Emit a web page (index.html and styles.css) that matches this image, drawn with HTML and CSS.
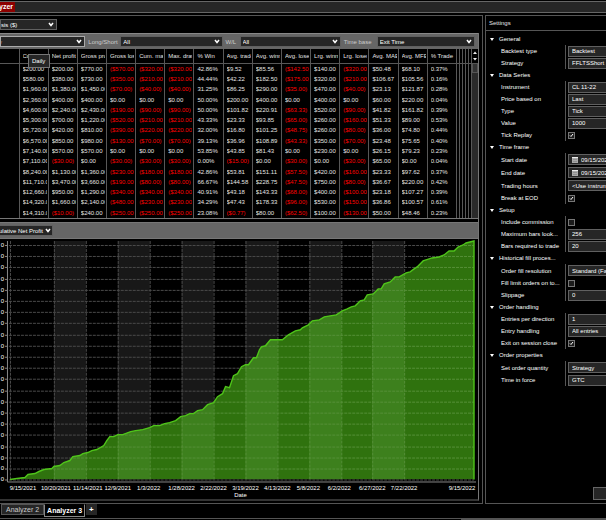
FILE: index.html
```html
<!DOCTYPE html>
<html lang="en">
<head>
  <meta charset="UTF-8" />
  <meta name="viewport" content="width=device-width, initial-scale=1.0"/>
  <title>Strategy Analyzer</title>
  <link rel="stylesheet" href="styles.css">
</head>
<body>
  <header class="titlebar"><h1>yzer</h1></header>

  <main class="workspace">
    <section class="results">
      <div class="display-bar">
        <select class="display-select" aria-label="Display"><option>sis ($)</option></select>
      </div>

      <div class="content">
        <div class="filters">
          <select class="period" aria-label="Period"><option>y</option></select>
          <label for="side">Long/Short</label>
          <select id="side"><option>All</option></select>
          <label for="wl">W/L</label>
          <select id="wl"><option>All</option></select>
          <label for="timeBase">Time base</label>
          <select id="timeBase"><option>Exit Time</option></select>
          <div class="tooltip">Daily</div>
        </div>

        <div class="grid">
          <table>
            <colgroup id="cols"></colgroup>
            <thead><tr id="headRow"></tr></thead>
            <tbody id="resultTable"></tbody>
          </table>
          <div class="scrollbar">
            <div class="arrows">
              <svg viewBox="0 0 6 14"><path d="M1 5l2-2.500 2 2.500zM1 9l2 2.500 2-2.500z" fill="#eee"/></svg>
            </div>
            <div class="thumb"></div>
          </div>
        </div>

        <div class="graph-bar">
          <select class="graph-select" aria-label="Graph"><option>ulative Net Profit</option></select>
        </div>

        <svg class="chart" id="chart" viewBox="0 0 479 261" preserveAspectRatio="xMinYMin meet"></svg>
      </div>
    </section>

    <aside class="settings">
      <h2>Settings</h2>
      <form>
        <h3>General</h3>
        <div class="prop"><label for="backtest">Backtest type</label><div class="field"><select id="backtest"><option>Backtest</option></select></div></div>
        <div class="prop"><label for="strategy">Strategy</label><div class="field"><select id="strategy"><option>FFLTSShort</option></select></div></div>

        <h3>Data Series</h3>
        <div class="prop"><label for="instrument">Instrument</label><div class="field"><input type="text" id="instrument" value="CL 11-22"></div></div>
        <div class="prop"><label for="price">Price based on</label><div class="field"><select id="price"><option>Last</option></select></div></div>
        <div class="prop"><label for="type">Type</label><div class="field"><select id="type"><option>Tick</option></select></div></div>
        <div class="prop"><label for="value">Value</label><div class="field"><input type="text" id="value" value="1000"></div></div>
        <div class="prop"><label for="replay">Tick Replay</label><div class="field"><input type="checkbox" id="replay" checked></div></div>

        <h3>Time frame</h3>
        <div class="prop tall"><label for="start">Start date</label><div class="field"><input type="text" class="date" id="start" value="09/15/2021"></div></div>
        <div class="prop tall"><label for="end">End date</label><div class="field"><input type="text" class="date" id="end" value="09/15/2022"></div></div>
        <div class="prop tall"><label for="hours">Trading hours</label><div class="field"><select id="hours"><option>&lt;Use instrument settings&gt;</option></select></div></div>
        <div class="prop"><label for="eod">Break at EOD</label><div class="field"><input type="checkbox" id="eod" checked></div></div>

        <h3>Setup</h3>
        <div class="prop"><label for="commission">Include commission</label><div class="field"><input type="checkbox" id="commission"></div></div>
        <div class="prop"><label for="maxBars">Maximum bars look...</label><div class="field"><select id="maxBars"><option>256</option></select></div></div>
        <div class="prop"><label for="barsReq">Bars required to trade</label><div class="field"><input type="text" id="barsReq" value="20"></div></div>

        <h3>Historical fill proces...</h3>
        <div class="prop tall"><label for="fill">Order fill resolution</label><div class="field"><select id="fill"><option>Standard (Fastest)</option></select></div></div>
        <div class="prop"><label for="limit">Fill limit orders on to...</label><div class="field"><input type="checkbox" id="limit"></div></div>
        <div class="prop"><label for="slippage">Slippage</label><div class="field"><input type="text" id="slippage" value="0"></div></div>

        <h3>Order handling</h3>
        <div class="prop"><label for="entries">Entries per direction</label><div class="field"><input type="text" id="entries" value="1"></div></div>
        <div class="prop"><label for="entry">Entry handling</label><div class="field"><select id="entry"><option>All entries</option></select></div></div>
        <div class="prop"><label for="exitClose">Exit on session close</label><div class="field"><input type="checkbox" id="exitClose" checked></div></div>

        <h3>Order properties</h3>
        <div class="prop tall"><label for="quantity">Set order quantity</label><div class="field"><select id="quantity"><option>Strategy</option></select></div></div>
        <div class="prop"><label for="tif">Time in force</label><div class="field"><select id="tif"><option>GTC</option></select></div></div>
      </form>
      <button type="button" class="run" aria-label="Run"></button>
    </aside>
  </main>

  <nav class="tabs">
    <button type="button">Analyzer 2</button>
    <button type="button" class="active">Analyzer 3</button>
    <button type="button" class="add">+</button>
  </nav>
  <footer class="statusline"><div></div></footer>

  <script>
    const heads = ["Cum. net", "Net profit", "Gross profit", "Gross loss", "Cum. max.", "Max. drawdown", "% Win",
      "Avg. trade", "Avg. winner", "Avg. loser", "Lrg. winner", "Lrg. loser", "Avg. MAE", "Avg. MFE", "% Trade"];

    // negative amounts are shown in brackets
    const rows = [
      "$200.00|$200.00|$770.00|($570.00)|($320.00)|($320.00)|42.86%|$9.52|$85.56|($142.50)|$140.00|($320.00)|$50.48|$68.10|0.37%",
      "$580.00|$380.00|$730.00|($350.00)|($210.00)|($210.00)|44.44%|$42.22|$182.50|($175.00)|$320.00|($210.00)|$106.67|$105.56|0.16%",
      "$1,960.00|$1,380.00|$1,450.00|($70.00)|($40.00)|($40.00)|31.25%|$86.25|$290.00|($35.00)|$470.00|($40.00)|$23.13|$121.87|0.28%",
      "$2,360.00|$400.00|$400.00|$0.00|$0.00|$0.00|50.00%|$200.00|$400.00|$0.00|$400.00|$0.00|$60.00|$220.00|0.04%",
      "$4,600.00|$2,240.00|$2,430.00|($190.00)|($90.00)|($90.00)|50.00%|$101.82|$220.91|($63.33)|$520.00|($90.00)|$41.82|$161.82|0.39%",
      "$5,300.00|$700.00|$1,220.00|($520.00)|($210.00)|($210.00)|43.33%|$23.33|$93.85|($65.00)|$260.00|($160.00)|$51.33|$89.00|0.53%",
      "$5,720.00|$420.00|$810.00|($390.00)|($220.00)|($220.00)|32.00%|$16.80|$101.25|($48.75)|$260.00|($80.00)|$36.00|$74.80|0.44%",
      "$6,570.00|$850.00|$980.00|($130.00)|($70.00)|($70.00)|39.13%|$36.96|$108.89|($43.33)|$350.00|($70.00)|$23.48|$75.65|0.40%",
      "$7,140.00|$570.00|$570.00|$0.00|$0.00|$0.00|53.85%|$43.85|$81.43|$0.00|$230.00|$0.00|$26.15|$79.23|0.23%",
      "$7,110.00|($30.00)|$0.00|($30.00)|($30.00)|($30.00)|0.00%|($15.00)|$0.00|($30.00)|$0.00|($30.00)|$65.00|$0.00|0.04%",
      "$8,240.00|$1,130.00|$1,360.00|($230.00)|($180.00)|($180.00)|42.86%|$53.81|$151.11|($57.50)|$420.00|($160.00)|$23.33|$97.62|0.37%",
      "$11,710.00|$3,470.00|$3,660.00|($190.00)|($80.00)|($80.00)|66.67%|$144.58|$228.75|($47.50)|$750.00|($80.00)|$36.67|$220.00|0.42%",
      "$12,660.00|$950.00|$1,290.00|($340.00)|($340.00)|($340.00)|40.91%|$43.18|$143.33|($68.00)|$400.00|($100.00)|$23.18|$107.27|0.39%",
      "$14,320.00|$1,660.00|$2,140.00|($480.00)|($230.00)|($230.00)|34.29%|$47.43|$178.33|($96.00)|$530.00|($150.00)|$36.86|$100.57|0.61%",
      "$14,310.00|($10.00)|$240.00|($250.00)|($250.00)|($250.00)|23.08%|($0.77)|$80.00|($62.50)|$100.00|($130.00)|$50.00|$48.46|0.23%"
    ];

    function renderTable() {
      // narrow collapsed columns on the right
      const thin = n => `<${n}></${n}>`.repeat(5);
      document.getElementById("cols").innerHTML =
        `<col class="first">` + "<col>".repeat(heads.length) + `<col class="thin">`.repeat(5);
      document.getElementById("headRow").innerHTML =
        "<th></th>" + heads.map(h => `<th><span>${h}</span></th>`).join("") + thin("th");
      document.getElementById("resultTable").innerHTML = rows.map(row => {
        const cells = row.split("|").map(v =>
          `<td${v[0] === "(" ? ' class="loss"' : ""}><span>${v}</span></td>`).join("");
        return `<tr><td></td>${cells}${thin("td")}</tr>`;
      }).join("");
    }

    const ticks = [[10, "9/15/2021", 23], [54, "10/20/2021", 56], [86, "11/14/2021", 88], [118, "12/9/2021", 118],
      [150, "1/3/2022", 149], [182, "1/28/2022", 182], [214, "2/22/2022", 214], [246, "3/19/2022", 246],
      [278, "4/13/2022", 278], [310, "5/8/2022", 309], [342, "6/2/2022", 340], [373, "6/27/2022", 373],
      [405, "7/22/2022", 405], [475, "9/15/2022", 463]];

    const curve = "10,241 17,240 25,239 28,236 35,235 39,233 44,231 52,230 54,228 60,227 64,224 70,222 73,218 80,217 " +
      "83,215 88,214 92,212 97,211 104,207 107,202 110,198 114,198 118,196 123,196 131,193 136,192 143,191 150,189 " +
      "154,187 160,187 165,185 170,184 176,182 181,178 186,177 190,175 194,175 198,172 203,171 208,166 214,164 " +
      "218,158 223,155 226,148 230,149 234,137 238,135 242,128 246,126 249,126 254,119 257,119 260,111 262,108 " +
      "266,107 271,101 283,101 289,96 296,92 301,91 303,89 309,86 313,82 320,81 325,78 337,76 343,72 348,70 " +
      "352,68 356,67 361,62 365,61 368,56 374,55 379,50 382,50 385,45 391,43 396,38 400,38 407,34 411,33 415,30 " +
      "418,28 424,22 433,19 440,18 445,16 450,12 455,12 459,8 464,6 467,4 475,2";

    function renderChart() {
      const area = `${curve} 475,241 10,241`;
      let bands = "", lines = "", labels = "";
      for (let i = 1; i < 13; i += 2) {
        bands += `<rect x="${ticks[i][0]}" y="2" width="${ticks[i + 1][0] - ticks[i][0]}" height="239"/>`;
      }
      ticks.forEach(([x, text, mid], i) => {
        if (i < 13) lines += `<path d="M${x}.5 2V241"/>`;
        labels += `<text x="${mid}" y="252" text-anchor="middle">${text}</text>`;
      });
      for (let i = 0; i < 22; i++) {
        const y = Math.round(6 + i * 11.2);
        lines += `<path d="M9 ${y}.5H475"/>`;
        labels += `<text x="4" y="${y + 2}" text-anchor="end">0</text><path class="axis" d="M5 ${y}.5h2"/>`;
      }
      document.getElementById("chart").innerHTML = `
        <clipPath id="under"><polygon points="${area}"/></clipPath>
        <g class="bands">${bands}</g>
        <g class="lines">${lines}</g>
        <g clip-path="url(#under)">
          <rect class="fill" x="10" y="0" width="466" height="241"/>
          <g class="bands-over">${bands}</g>
          <g class="lines-over">${lines}</g>
        </g>
        <polyline class="curve" points="${curve} 475,241"/>
        <path class="axis" d="M7.500 2V243.500H477"/>
        <g class="labels">${labels}<text x="241" y="259" text-anchor="middle">Date</text></g>`;
    }

    renderTable();
    renderChart();
  </script>
</body>
</html>
```
FILE: styles.css
```css
* { box-sizing: border-box; }
body {
  margin: 0;
  min-height: 100vh;
  display: flex;
  flex-direction: column;
  background: #000;
  color: #e4e4e4;
  font: 6px/8px "Liberation Sans", Arial, sans-serif;
  overflow: hidden;
}
h1, h2, h3 { margin: 0; font-size: 6px; font-weight: normal; }
select, input, button { font: inherit; color: #fff; margin: 0; border-radius: 0; }
select, input[type="text"] {
  appearance: none;
  height: 11px;
  padding: 0 2px;
  border: 1px solid #606060;
  background: #262626;
  outline: none;
}
select {
  padding-right: 10px;
  background: #262626 url("data:image/svg+xml,%3Csvg xmlns='http://www.w3.org/2000/svg' viewBox='0 0 6 5'%3E%3Cpath d='M1 1l2 2.500 2-2.500' fill='none' stroke='white' stroke-width='1.500'/%3E%3C/svg%3E") no-repeat right 2px center / 6px 5px;
}

/* title bar */
.titlebar {
  height: 12px;
  margin-top: 1px;
  background: #262626;
  border-top: 1px solid #666;
  border-bottom: 1px solid #666;
}
.titlebar h1 {
  width: 15px;
  background: #8c0000;
  color: #fff;
  font-size: 7px;
  font-weight: bold;
  line-height: 10px;
  text-indent: -1px;
}

.workspace {
  flex: 1;
  margin-top: 2px;
  display: grid;
  grid-template-columns: minmax(0, 1fr) 121px;
  gap: 2px;
}

/* left side */
.results {
  display: flex;
  flex-direction: column;
  border: 1px solid #555;
  border-left: 0;
  padding-right: 3px;
  background: #000;
}
.display-bar { height: 17px; padding-top: 3px; }
.display-select { width: 57px; padding-left: 0; }
.content {
  flex: 1;
  display: flex;
  flex-direction: column;
  border-right: 1px solid #777;
  border-bottom: 2px solid #333;
  margin-bottom: 2px;
}
.filters {
  position: relative;
  display: grid;
  grid-template-columns: 86fr 29px 103fr 11px 102fr 30px 99fr;
  align-items: center;
  gap: 3px;
  height: 16px;
  padding-right: 3px;
  background: #666;
  border-top: 1px solid #888;
  color: #ccc;
}
.filters label { white-space: nowrap; }
.filters .period { padding-left: 0; color: #d08040; text-indent: -2px; border-color: #aaa; }
.tooltip {
  position: absolute;
  left: 28px;
  top: 20px;
  padding: 2px 4px 2px 3px;
  border: 1px solid #777;
  background: #262626;
  color: #fff;
}

.grid { display: flex; border-bottom: 1px solid #777; }
table {
  flex: 1;
  width: 0;
  height: 169px;
  table-layout: fixed;
  border-collapse: collapse;
}
.first { width: 19px; }
.thin { width: 3px; }
th, td { padding: 0; border-right: 1px solid #585858; font-weight: normal; text-align: left; }
th { height: 14px; border-bottom: 1px solid #585858; }
th span, td span { display: block; margin: 0 1px 0 3px; overflow: hidden; white-space: nowrap; }
td.loss { color: #f00; }
.scrollbar { width: 6px; background: #2a2a2a; }
.arrows { height: 14px; background: #000; }
.arrows svg { display: block; width: 6px; height: 14px; }
.thumb { height: 10px; border: 1px solid #555; background: #333; }

.graph-bar {
  height: 17px;
  margin-top: 3px;
  padding-top: 2px;
  background: #666;
  border-top: 1px solid #777;
  border-bottom: 1px solid #777;
}
.graph-select {
  display: block;
  width: 53px;
  padding: 0 7px 0 0;
  border-left: 0;
  text-indent: -1px;
  background-position: right 1px center;
}

/* chart */
.chart { display: block; width: 100%; }
.bands { fill: #181818; }
.lines { stroke: #4a4a4a; stroke-dasharray: 3 1; }
.fill { fill: #2f720e; }
.bands-over { fill: #3d801d; }
.lines-over { stroke: #559038; stroke-dasharray: 3 1; }
.curve { fill: none; stroke: #4fc41a; stroke-width: 1.4; }
.axis { fill: none; stroke: #888; }
.labels { fill: #fff; font-size: 6px; }

/* settings */
.settings {
  display: flex;
  flex-direction: column;
  border: 1px solid #555;
  border-right: 0;
  overflow: hidden;
}
.settings h2 { padding: 3px; border-bottom: 1px solid #555; }
.settings form { flex: 1; padding-top: 2px; }
.settings h3 { display: flex; align-items: center; height: 12px; padding-left: 4px; color: #fff; }
.settings h3::before {
  content: "";
  margin-right: 5px;
  border: 2px solid transparent;
  border-top: 3px solid #fff;
  border-bottom: 0;
}
.prop { display: flex; align-items: center; height: 12px; padding-left: 15px; }
.prop.tall { height: 13px; }
.prop label { flex: 1; white-space: nowrap; color: #fff; }
.field {
  width: 41px;
  height: 100%;
  display: flex;
  align-items: center;
  border-left: 1px solid #555;
  padding-left: 2px;
}
.field select, .field input[type="text"] {
  width: 100%;
  min-width: 0;
  padding: 0 0 0 3px;
  border-right: 0;
  background-image: none;
}
.field input.date[type="text"] {
  padding-left: 12px;
  background: #262626 url("data:image/svg+xml,%3Csvg xmlns='http://www.w3.org/2000/svg' viewBox='0 0 6 7'%3E%3Cpath d='M0 1h6v6H0z' fill='%23aaa'/%3E%3Cpath d='M0 1h6v1H0z' fill='%23eee'/%3E%3Cpath d='M1 3.500h4M1 5.500h4' stroke='%23777' stroke-width='.5'/%3E%3C/svg%3E") no-repeat 3px center / 6px 7px;
}
.field input[type="checkbox"] {
  appearance: none;
  width: 7px;
  height: 7px;
  border: 1px solid #777;
  background: #1c1c1c;
}
.field input[type="checkbox"]:checked {
  background: #1c1c1c url("data:image/svg+xml,%3Csvg xmlns='http://www.w3.org/2000/svg' viewBox='0 0 5 5'%3E%3Cpath d='M1 2.500l1 1 2-2.500' fill='none' stroke='white'/%3E%3C/svg%3E") center / 5px 5px;
}
.run {
  align-self: flex-end;
  width: 12px;
  height: 13px;
  margin-bottom: 3px;
  border: 1px solid #666;
  border-right: 0;
  background: #262626;
}

/* bottom tabs */
.tabs { display: flex; align-items: flex-start; height: 14px; }
.tabs button {
  height: 11px;
  padding: 0 4px;
  border: 1px solid #555;
  background: #262626;
  color: #ccc;
  font-size: 7px;
  line-height: 9px;
}
.tabs button:first-child { margin-left: 1px; }
.tabs .active {
  height: 13px;
  padding: 0 2px;
  border: 1px solid #888;
  border-top-color: #000;
  background: #000;
  color: #fff;
  font-weight: bold;
}
.tabs .add { margin-left: 1px; padding: 0 2px; border-color: #262626; font-size: 8px; font-weight: bold; color: #fff; }
.statusline { height: 2px; border-top: 1px solid #555; }
.statusline div { width: 24%; height: 1px; margin-left: auto; background: #555; }
```
